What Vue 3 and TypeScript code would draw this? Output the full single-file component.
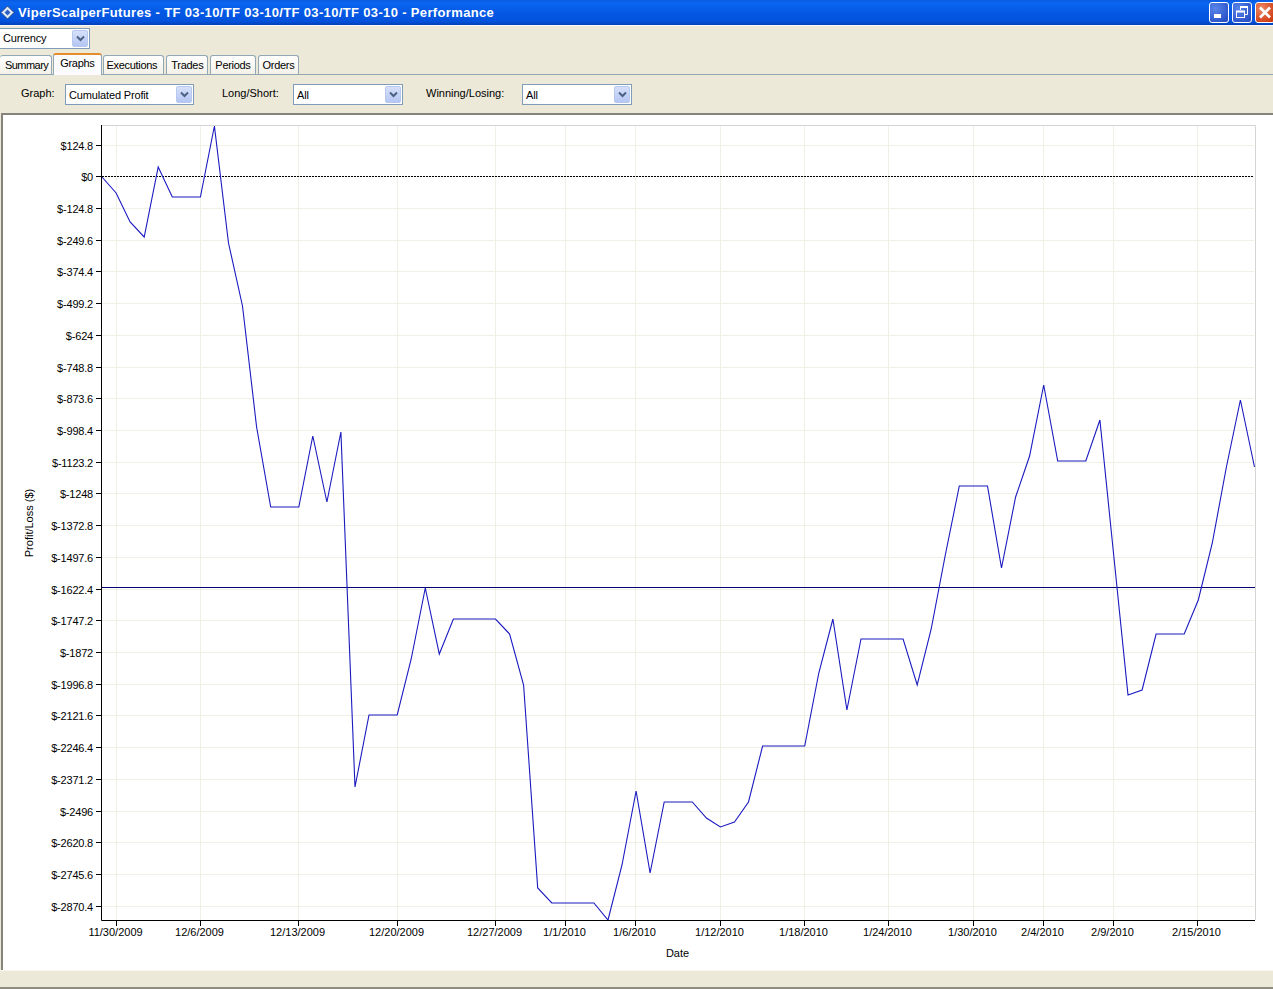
<script setup lang="ts">
// equity curve samples, one every ~14px
const curve: number[] = [
  177, 193, 222, 237, 167, 197, 197, 197, 126, 243, 306, 427, 507, 507, 507, 436, 502, 432, 787, 715, 715, 715, 659,
  588, 654, 619, 619, 619, 619, 634, 685, 888, 903, 903, 903, 903, 920, 865, 791, 873, 802, 802, 802, 818, 827, 822,
  802, 746, 746, 746, 746, 673, 619, 710, 639, 639, 639, 639, 685, 629, 555, 486, 486, 486, 568, 497, 456, 385, 461,
  461, 461, 420, 558, 695, 690, 634, 634, 634, 600, 543, 467, 400, 467,
];
const stepX = (1254.5 - 102) / (curve.length - 1);
const points = curve.map((y, i) => `${(102 + i * stepX).toFixed(1)},${y}`).join(" ");

const yLabels = [
  "$124.8", "$0", "$-124.8", "$-249.6", "$-374.4", "$-499.2", "$-624", "$-748.8", "$-873.6", "$-998.4",
  "$-1123.2", "$-1248", "$-1372.8", "$-1497.6", "$-1622.4", "$-1747.2", "$-1872", "$-1996.8", "$-2121.6",
  "$-2246.4", "$-2371.2", "$-2496", "$-2620.8", "$-2745.6", "$-2870.4",
];
const yTicks = yLabels.map((label, i) => ({ label, y: Math.floor(145 + i * 31.72) + 0.5 }));

const xTicks = [
  { label: "11/30/2009", x: 116 }, { label: "12/6/2009", x: 200 }, { label: "12/13/2009", x: 298 },
  { label: "12/20/2009", x: 397 }, { label: "12/27/2009", x: 495 }, { label: "1/1/2010", x: 565 },
  { label: "1/6/2010", x: 635 }, { label: "1/12/2010", x: 720 }, { label: "1/18/2010", x: 804 },
  { label: "1/24/2010", x: 888 }, { label: "1/30/2010", x: 973 }, { label: "2/4/2010", x: 1043 },
  { label: "2/9/2010", x: 1113 }, { label: "2/15/2010", x: 1197 },
].map((t) => ({ ...t, x: t.x + 0.5 }));

const tabs = ["Summary", "Graphs", "Executions", "Trades", "Periods", "Orders"];
const filters = [
  { label: "Graph:", value: "Cumulated Profit", labelWidth: 44, width: 129, after: 28 },
  { label: "Long/Short:", value: "All", labelWidth: 71, width: 110, after: 23 },
  { label: "Winning/Losing:", value: "All", labelWidth: 96, width: 110, after: 0 },
];
</script>

<template>
  <div class="window">
    <header class="titlebar">
      <svg class="app-icon" width="15" height="15" viewBox="0 0 15 15">
        <path d="M7.5 1 14 7.5 7.5 14 1 7.5Z" fill="#e4ebf8" stroke="#27467f" stroke-width="1" />
        <path d="M7.5 4.5 10.5 7.5 7.5 10.5 4.5 7.5Z" fill="#2f62c4" />
      </svg>
      <span class="title">ViperScalperFutures - TF 03-10/TF 03-10/TF 03-10/TF 03-10 - Performance</span>
      <div class="caption-btns">
        <button class="cap blue">
          <svg width="18" height="19" viewBox="0 0 18 19"><rect x="4" y="11" width="7" height="4" fill="#fff" /></svg>
        </button>
        <button class="cap blue">
          <svg width="18" height="19" viewBox="0 0 18 19" fill="none" stroke="#fff">
            <path d="M7.5 7V4.5h7v7H12" stroke-width="1" />
            <path d="M7 4h8" stroke-width="2" />
            <rect x="3.5" y="8.5" width="8" height="6" stroke-width="1" />
            <path d="M3 8.5h9" stroke-width="2" />
          </svg>
        </button>
        <button class="cap red">
          <svg width="18" height="19" viewBox="0 0 18 19"><path d="M4 4.5 14 14.5M14 4.5 4 14.5" stroke="#fff" stroke-width="2.6" /></svg>
        </button>
      </div>
    </header>

    <div class="currency-row">
      <div class="combo currency">
        <span class="combo-text">Currency</span>
        <span class="combo-arrow">
          <svg width="9" height="7" viewBox="0 0 9 7"><path d="M1 1.5 4.5 5 8 1.5" fill="none" stroke="#4d6185" stroke-width="2" /></svg>
        </span>
      </div>
    </div>

    <nav class="tabs">
      <div v-for="tab in tabs" :key="tab" class="tab" :class="{ active: tab === 'Graphs' }">{{ tab }}</div>
    </nav>

    <div class="filters">
      <div v-for="f in filters" :key="f.label" class="filter" :style="{ marginRight: f.after + 'px' }">
        <label :style="{ width: f.labelWidth + 'px' }">{{ f.label }}</label>
        <div class="combo" :style="{ width: f.width + 'px' }">
          <span class="combo-text">{{ f.value }}</span>
          <span class="combo-arrow">
            <svg width="9" height="7" viewBox="0 0 9 7"><path d="M1 1.5 4.5 5 8 1.5" fill="none" stroke="#4d6185" stroke-width="2" /></svg>
          </span>
        </div>
      </div>
    </div>

    <main class="chart-panel">
      <svg class="chart" width="1269" height="855" viewBox="3 115 1269 855">
        <g stroke="#f1f0e6" stroke-width="1">
          <line v-for="t in yTicks" :key="t.label" x1="102" x2="1254" :y1="t.y" :y2="t.y" />
          <line v-for="t in xTicks" :key="t.label" :x1="t.x" :x2="t.x" y1="126" y2="920" />
        </g>
        <path d="M102 125.5H1255.5V920" fill="none" stroke="#d4d4d4" />

        <line x1="102" x2="1253" y1="176.5" y2="176.5" stroke="#000" stroke-dasharray="2 1" />
        <line x1="102" x2="1255" y1="587.5" y2="587.5" stroke="#000070" />
        <polyline :points="points" fill="none" stroke="#1a1ac0" stroke-width="1.1" />

        <path d="M101.5 125V920.5H1255" fill="none" stroke="#000" />
        <g stroke="#000">
          <line v-for="t in yTicks" :key="t.label" x1="96" x2="101" :y1="t.y" :y2="t.y" />
          <line v-for="t in xTicks" :key="t.label" :x1="t.x" :x2="t.x" y1="921" y2="926" />
        </g>
        <g class="axis-text">
          <text v-for="t in yTicks" :key="t.label" class="y-label" x="93" :y="t.y + 4.5" text-anchor="end">{{ t.label }}</text>
          <text v-for="t in xTicks" :key="t.label" :x="t.x - 1" y="936" text-anchor="middle">{{ t.label }}</text>
          <text x="677.5" y="957" text-anchor="middle">Date</text>
          <text transform="translate(33 523) rotate(-90)" text-anchor="middle">Profit/Loss ($)</text>
        </g>
      </svg>
    </main>

    <footer class="statusbar"></footer>
  </div>
</template>

<style scoped>
.window {
  width: 1273px;
  height: 989px;
  display: flex;
  flex-direction: column;
  background: #ece9d8;
  font-family: "Liberation Sans", Arial, sans-serif;
  font-size: 11px;
  color: #000;
  overflow: hidden;
}

.titlebar {
  height: 25px;
  flex: none;
  display: flex;
  align-items: center;
  padding: 0 0 1px 0;
  box-sizing: border-box;
  gap: 3px;
  background: linear-gradient(to bottom, #0a5ae0 0%, #0a66f0 12%, #0458e4 50%, #0352dc 85%, #0340b8 100%);
}

.app-icon {
  flex: none;
}

.title {
  color: #fff;
  font-weight: bold;
  font-size: 13px;
  letter-spacing: 0.35px;
  white-space: nowrap;
}

.caption-btns {
  margin-left: auto;
  margin-right: -2px;
  display: flex;
  gap: 3px;
}

.cap {
  width: 20px;
  height: 21px;
  padding: 0;
  border: 1px solid #fff;
  border-radius: 3px;
  display: flex;
  align-items: center;
  justify-content: center;
}

.cap.blue {
  background: radial-gradient(circle at 30% 30%, #5a86ea, #2a52c8 80%);
}

.cap.red {
  background: radial-gradient(circle at 30% 30%, #ec8a66, #cf3c12 80%);
}

.currency-row {
  height: 26px;
  flex: none;
  padding-top: 2px;
  box-sizing: border-box;
  border-top: 1px solid #fbfaf5;
}

.combo {
  height: 21px;
  box-sizing: border-box;
  display: flex;
  align-items: center;
  justify-content: space-between;
  background: #fff;
  border: 1px solid #7f9db9;
  padding: 1px;
}

.currency {
  width: 90px;
  border-left: none;
}

.combo-text {
  padding-left: 2px;
  padding-top: 1px;
  letter-spacing: -0.15px;
}

.currency .combo-text {
  padding-top: 0;
  padding-bottom: 1px;
}

.combo-arrow {
  width: 16px;
  height: 17px;
  display: flex;
  align-items: center;
  justify-content: center;
  background: linear-gradient(to bottom, #d6e0fa, #b4c6f2);
  border: 1px solid #b6c8ee;
  border-radius: 2px;
  box-sizing: border-box;
}

.tabs {
  height: 24px;
  flex: none;
  display: flex;
  align-items: flex-end;
  box-sizing: border-box;
  border-bottom: 1px solid #91a7b4;
  gap: 2px;
}

.tab {
  height: 19px;
  padding: 0 4px;
  display: flex;
  align-items: center;
  box-sizing: border-box;
  background: linear-gradient(to bottom, #fff, #f3f1e8);
  border: 1px solid #91a7b4;
  border-bottom: none;
  border-radius: 3px 3px 0 0;
  letter-spacing: -0.3px;
}

.tab:first-child {
  border-left: none;
  padding-left: 5px;
  padding-right: 3px;
  letter-spacing: -0.55px;
}

.tab:nth-child(3) {
  padding-left: 3px;
  padding-right: 6px;
}

.tab.active {
  height: 22px;
  padding: 0 6px 4px;
  margin: 0 -1px -1px;
  background: #fcfcfe;
  border-top: 2px solid #e68b2c;
}

.filters {
  height: 38px;
  flex: none;
  display: flex;
  align-items: center;
  padding-left: 21px;
  box-sizing: border-box;
}

.filter {
  display: flex;
  align-items: center;
}

.filter label {
  margin-top: -3px;
}

.chart-panel {
  flex: 1;
  margin-left: 1px;
  background: #fff;
  border-left: 2px solid #85837a;
  border-top: 2px solid #85837a;
  min-height: 0;
  overflow: hidden;
}

.chart {
  display: block;
}

.axis-text text {
  font-family: "Liberation Sans", Arial, sans-serif;
  font-size: 11px;
  fill: #000;
}

.axis-text .y-label {
  letter-spacing: -0.2px;
}

.statusbar {
  height: 19px;
  flex: none;
  background: #ece9d8;
  border-top: 1px solid #f8f7f0;
  border-bottom: 2px solid #8f8d80;
  box-sizing: border-box;
}
</style>

<style>
html,
body {
  margin: 0;
  background: #ece9d8;
}
</style>
